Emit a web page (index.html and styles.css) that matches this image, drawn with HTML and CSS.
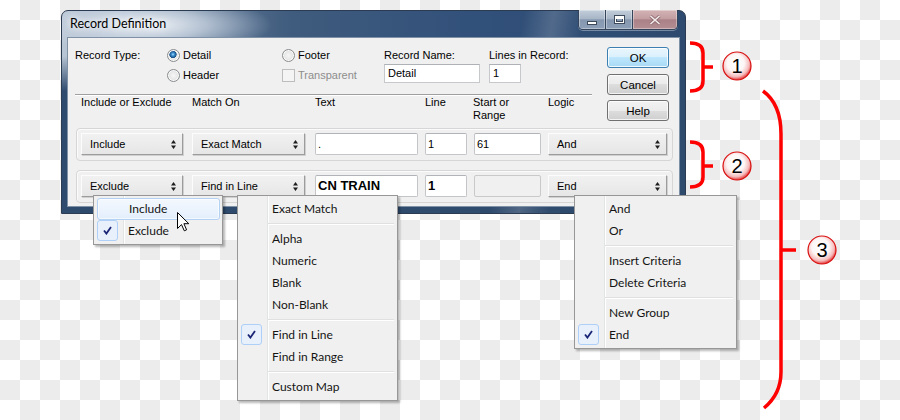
FILE: index.html
```html
<!DOCTYPE html>
<html>
<head>
<meta charset="utf-8">
<title>Record Definition</title>
<link rel="stylesheet" href="styles.css">
</head>
<body>
<div class="stage">
  <div class="window">
    <div class="titlebar">
      <span class="title">Record Definition</span>
      <div class="caption-btns">
        <span class="cb cb-min"><i class="g-min"></i></span>
        <span class="cb cb-max"><i class="g-max"></i></span>
        <span class="cb cb-close"><svg width="12" height="10" viewBox="0 0 12 10"><path d="M1.5 1 L10.5 9 M10.5 1 L1.5 9" stroke="#8c6b70" stroke-width="3.2"/><path d="M1.5 1 L10.5 9 M10.5 1 L1.5 9" stroke="#f4eaea" stroke-width="1.6"/></svg></span>
      </div>
    </div>
    <div class="client">
      <div class="upper">
        <div class="upper-main">
          <div class="rtype">
            <span class="lbl">Record Type:</span>
            <span class="opt"><span class="radio on"></span>Detail</span>
            <span class="opt"><span class="radio"></span>Footer</span>
            <span class="lbl">Record Name:</span>
            <span class="lbl">Lines in Record:</span>
            <span></span>
            <span class="opt"><span class="radio"></span>Header</span>
            <span class="opt dis"><span class="check"></span>Transparent</span>
            <span class="tb tb-name">Detail</span>
            <span class="tb tb-lines">1</span>
          </div>
          <div class="sep"></div>
          <div class="cols">
            <span class="h1">Include or Exclude</span>
            <span class="h2">Match On</span>
            <span class="h3">Text</span>
            <span class="h4">Line</span>
            <span class="h5">Start or<br>Range</span>
            <span class="h6">Logic</span>
          </div>
        </div>
        <div class="btns">
          <span class="btn btn-default">OK</span>
          <span class="btn btn-cancel">Cancel</span>
          <span class="btn btn-help">Help</span>
        </div>
      </div>

      <div class="crit">
        <span class="combo w1">Include<svg class="arr" width="5" height="9" viewBox="0 0 5 9"><path d="M2.5 0 L5 3.5 H0Z M0 5.5 H5 L2.5 9Z" fill="#1e1e1e"/></svg></span>
        <span class="combo w2">Exact Match<svg class="arr" width="5" height="9" viewBox="0 0 5 9"><path d="M2.5 0 L5 3.5 H0Z M0 5.5 H5 L2.5 9Z" fill="#1e1e1e"/></svg></span>
        <span class="inp w3">.</span>
        <span class="inp w4">1</span>
        <span class="inp w5">61</span>
        <span class="combo w6">And<svg class="arr" width="5" height="9" viewBox="0 0 5 9"><path d="M2.5 0 L5 3.5 H0Z M0 5.5 H5 L2.5 9Z" fill="#1e1e1e"/></svg></span>
      </div>
      <div class="crit">
        <span class="combo w1">Exclude<svg class="arr" width="5" height="9" viewBox="0 0 5 9"><path d="M2.5 0 L5 3.5 H0Z M0 5.5 H5 L2.5 9Z" fill="#1e1e1e"/></svg></span>
        <span class="combo w2">Find in Line<svg class="arr" width="5" height="9" viewBox="0 0 5 9"><path d="M2.5 0 L5 3.5 H0Z M0 5.5 H5 L2.5 9Z" fill="#1e1e1e"/></svg></span>
        <span class="inp w3 bold">CN TRAIN</span>
        <span class="inp w4 bold">1</span>
        <span class="inp w5 disabled"></span>
        <span class="combo w6">End<svg class="arr" width="5" height="9" viewBox="0 0 5 9"><path d="M2.5 0 L5 3.5 H0Z M0 5.5 H5 L2.5 9Z" fill="#1e1e1e"/></svg></span>
      </div>
    </div>
  </div>

  <div class="menu menu-ie">
    <div class="mi hover">Include</div>
    <div class="mi"><span class="tick"><svg width="9" height="9" viewBox="0 0 9 9"><path d="M1 4.5 L3.4 7.6 L8 1" stroke="#1b2677" stroke-width="1.8" fill="none"/></svg></span>Exclude</div>
  </div>

  <div class="menu menu-match">
    <div class="mi">Exact Match</div>
    <div class="ms"></div>
    <div class="mi">Alpha</div>
    <div class="mi">Numeric</div>
    <div class="mi">Blank</div>
    <div class="mi">Non-Blank</div>
    <div class="ms"></div>
    <div class="mi"><span class="tick"><svg width="9" height="9" viewBox="0 0 9 9"><path d="M1 4.5 L3.4 7.6 L8 1" stroke="#1b2677" stroke-width="1.8" fill="none"/></svg></span>Find in Line</div>
    <div class="mi">Find in Range</div>
    <div class="ms"></div>
    <div class="mi">Custom Map</div>
  </div>

  <div class="menu menu-logic">
    <div class="mi">And</div>
    <div class="mi">Or</div>
    <div class="ms"></div>
    <div class="mi">Insert Criteria</div>
    <div class="mi">Delete Criteria</div>
    <div class="ms"></div>
    <div class="mi">New Group</div>
    <div class="mi"><span class="tick"><svg width="9" height="9" viewBox="0 0 9 9"><path d="M1 4.5 L3.4 7.6 L8 1" stroke="#1b2677" stroke-width="1.8" fill="none"/></svg></span>End</div>
  </div>

  <svg class="cursor" width="13" height="20" viewBox="0 0 13 20"><path d="M0.5 0.5 L0.5 16.5 L4.5 12.6 L7.3 18.8 L9.6 17.8 L6.9 11.7 L11.8 11.7 Z" fill="#fff" stroke="#000" stroke-width="1" stroke-linejoin="miter"/></svg>

  <svg class="notes" width="900" height="420" viewBox="0 0 900 420">
    <defs>
      <radialGradient id="rg" cx="45%" cy="40%" r="62%">
        <stop offset="0" stop-color="#ffffff"/>
        <stop offset="0.5" stop-color="#fdf6f6"/>
        <stop offset="0.78" stop-color="#f5bcbc"/>
        <stop offset="1" stop-color="#e02020"/>
      </radialGradient>
    </defs>
    <g fill="none" stroke="#f00" stroke-width="3.5">
      <path d="M690 43 Q703 43 703 53 L703 81 Q703 91 690 91 M703 67 L713 67"/>
      <path d="M690 142 Q703 142 703 152 L703 177 Q703 187 690 187 M703 166 L713 166"/>
      <path d="M763 91 Q781 104 781 134 L781 372 Q781 394 764 408 M781 250 L796 250"/>
    </g>
    <g stroke="#d81010" stroke-width="1.2" fill="url(#rg)">
      <circle cx="737" cy="66" r="14"/>
      <circle cx="737" cy="166" r="14"/>
      <circle cx="822" cy="250" r="14"/>
    </g>
    <g font-family="Liberation Sans, Arial, sans-serif" font-size="20" text-anchor="middle" fill="#000">
      <text x="737" y="73">1</text>
      <text x="737" y="173">2</text>
      <text x="822" y="257">3</text>
    </g>
  </svg>
</div>
</body>
</html>
```

FILE: styles.css
```css
* { box-sizing: border-box; }
html, body { margin: 0; padding: 0; }
body {
  width: 900px;
  height: 420px;
  overflow: hidden;
  font-family: "Liberation Sans", Arial, sans-serif;
  font-size: 11px;
  color: #000;
  background: repeating-conic-gradient(#ececec 0 25%, #ffffff 0 50%) 0 0 / 40px 40px;
}
.stage {
  position: relative;
  width: 900px;
  height: 420px;
  padding: 10px 0 0 61px;
}

/* ---------- window frame ---------- */
.window {
  width: 625px;
  border: 1px solid #2a3b52;
  border-radius: 7px 7px 0 0;
  padding: 0 6px 7px 6px;
  background:
    radial-gradient(ellipse 120px 30px at 90px 14px, rgba(238,242,247,0.95) 0, rgba(214,223,234,0.7) 45%, rgba(200,212,226,0) 100%),
    linear-gradient(100deg, rgba(255,255,255,0) 455px, rgba(255,255,255,0.16) 485px, rgba(255,255,255,0) 515px),
    linear-gradient(180deg, rgba(46,73,108,0) 0, rgba(46,73,108,0) 45px, #2e4a6d 80px),
    linear-gradient(90deg, #b8c5d4 0, #a3b3c6 60px, #5f7896 140px, #3f5b7d 230px, #31507a 420px, #2e4a6e 100%);
}
.titlebar {
  display: flex;
  height: 27px;
}
.title {
  margin: 5px 0 0 2px;
  font-family: Lato, "Liberation Sans", sans-serif;
  font-size: 12.5px;
  line-height: 16px;
  color: #000;
  text-shadow: 0 0 6px #fff, 0 0 10px rgba(255,255,255,0.9);
}
.caption-btns {
  display: flex;
  margin: -1px 1px 0 auto;
  height: 20px;
  border: 1px solid #34455b;
  border-top: none;
  border-radius: 0 0 5px 5px;
  overflow: hidden;
  box-shadow: 0 1px 0 rgba(255,255,255,0.35);
}
.cb {
  display: flex;
  align-items: center;
  justify-content: center;
  height: 19px;
  box-shadow: inset 0 0 0 1px rgba(255,255,255,0.35);
}
.cb + .cb { border-left: 1px solid #34455b; }
.cb-min, .cb-max {
  width: 27px;
  background: linear-gradient(180deg, #c3ceda 0, #a8b6c7 45%, #8598b0 52%, #8c9fb6 100%);
}
.cb-min { width: 26px; }
.cb-close {
  width: 45px;
  background: linear-gradient(180deg, #d3b3b5 0, #c29ea1 45%, #aa8186 52%, #b48e93 100%);
}
.g-min {
  display: block;
  width: 10px;
  height: 4px;
  margin-top: 6px;
  background: #fff;
  border: 1px solid #3c4a5c;
}
.g-max {
  display: block;
  width: 11px;
  height: 9px;
  background: transparent;
  border: 1px solid #3c4a5c;
  box-shadow: inset 0 0 0 1px #fff, inset 0 2px 0 1px #fff, inset 0 0 0 2px #3c4a5c;
}

/* ---------- client area ---------- */
.client {
  background: #f0f0f0;
  box-shadow: 0 0 0 1px #7f91a7;
  padding-bottom: 3px;
}
.upper { display: flex; }
.upper-main {
  flex-shrink: 0;
  width: 524px;
  padding: 7px 0 0 7px;
}
.rtype {
  display: grid;
  grid-template-columns: 92px 115px 102px 105px 103px;
  grid-template-rows: 20px 20px;
  align-items: center;
}
.lbl { white-space: nowrap; }
.opt {
  display: flex;
  align-items: center;
  gap: 3px;
  white-space: nowrap;
}
.opt.dis { color: #8d8d8d; }
.radio {
  width: 13px;
  height: 13px;
  border-radius: 50%;
  border: 1px solid #8a8c8e;
  background: radial-gradient(circle at 50% 50%, #f6f6f6 0, #ebebeb 40%, #d2d4d6 90%);
  box-shadow: inset 0 0 0 1px #fbfbfb;
}
.radio.on {
  background:
    radial-gradient(circle at 45% 40%, #a5dcff 0, #3d8fd0 1.5px, #1e5a96 3px, #174d84 3.4px, rgba(0,0,0,0) 3.9px),
    radial-gradient(circle at 50% 50%, #f6f6f6 0, #ebebeb 40%, #d2d4d6 90%);
}
.check {
  width: 13px;
  height: 13px;
  border: 1px solid #bdbdbd;
  background: #f4f4f4;
}
.tb {
  align-self: start;
  margin-top: -1px;
  height: 19px;
  line-height: 17px;
  padding-left: 3px;
  background: #fff;
  border: 1px solid #c6c8cc;
  border-top-color: #aeb1b6;
}
.tb-name { width: 96px; }
.tb-lines { width: 32px; }
.sep {
  width: 517px;
  margin-top: 9px;
  border-top: 1px solid #a0a0a0;
  border-bottom: 1px solid #fff;
}
.cols {
  display: flex;
  height: 26px;
  padding-left: 6px;
  line-height: 13px;
}
.cols > span { flex-shrink: 0; white-space: nowrap; }
.h1 { width: 111px; }
.h2 { width: 123px; }
.h3 { width: 110px; }
.h4 { width: 48px; }
.h5 { width: 75px; }
.h6 { width: 40px; }

.btns {
  display: flex;
  flex-direction: column;
  margin-left: 15px;
  padding-top: 9px;
}
.btn {
  display: flex;
  align-items: center;
  justify-content: center;
  width: 62px;
  height: 21px;
  border: 1px solid #707070;
  border-radius: 3px;
  background: linear-gradient(180deg, #f2f2f2 0, #ebebeb 50%, #dddddd 50%, #cfcfcf 100%);
  box-shadow: inset 0 0 0 1px rgba(255,255,255,0.75);
  font-size: 11.5px;
}
.btn-default {
  border-color: #3c7fb1;
  background: linear-gradient(180deg, #eaf6fd 0, #d9f0fc 50%, #bee6fd 50%, #a7d9f5 100%);
  box-shadow: inset 0 0 0 1px rgba(255,255,255,0.8);
}
.btn-cancel { margin-top: 6px; }
.btn-help { margin-top: 5px; }

/* ---------- criteria rows ---------- */
.crit {
  display: flex;
  width: 597px;
  height: 33px;
  margin: 6px 0 0 8px;
  padding: 4px 0 0 4px;
  border: 1px solid #d6d6d6;
  border-radius: 4px;
  box-shadow: inset 1px 1px 0 #fbfbfb;
}
.crit + .crit { margin-top: 9px; }
.crit > span { flex-shrink: 0; }
.combo {
  display: flex;
  align-items: center;
  justify-content: space-between;
  height: 22px;
  padding: 0 6px 0 8px;
  border: 1px solid;
  border-color: #fcfcfc #9c9c9c #9c9c9c #fcfcfc;
  background: linear-gradient(180deg, #f1f1f1 0, #e6e6e6 100%);
  box-shadow: 1px 1px 0 #d0d0d0;
  white-space: nowrap;
}
.inp {
  height: 22px;
  line-height: 20px;
  padding-left: 2px;
  background: #fff;
  border: 1px solid #c3c5c9;
  border-top-color: #b0b3b8;
  border-radius: 2px;
  white-space: nowrap;
}
.inp.bold {
  font-weight: bold;
  font-size: 13px;
}
.inp.disabled { background: #f0f0f0; border-color: #c9c9c9; }
.w1 { width: 102px; }
.w2 { width: 113px; margin-left: 9px; }
.w3 { width: 103px; margin-left: 10px; }
.w4 { width: 42px; margin-left: 7px; }
.w5 { width: 67px; margin-left: 7px; }
.w6 { width: 119px; margin-left: 7px; }

/* ---------- popup menus ---------- */
.menu {
  position: absolute;
  top: 195px;
  padding: 2px;
  border: 1px solid #979797;
  background:
    linear-gradient(90deg, rgba(0,0,0,0) 29px, #e2e3e3 29px, #e2e3e3 30px, #ffffff 30px, #ffffff 31px, rgba(0,0,0,0) 31px),
    #f0f0f0;
  box-shadow: 2px 2px 2px rgba(0,0,0,0.28);
  font-family: Lato, "Liberation Sans", sans-serif;
  font-size: 12px;
  color: #141414;
}
.menu-ie { left: 93px; width: 130px; }
.menu-match { left: 237px; width: 161px; }
.menu-logic { left: 574px; width: 163px; }
.mi {
  display: flex;
  align-items: center;
  height: 22px;
  padding-left: 32px;
  padding-bottom: 1px;
  white-space: nowrap;
}
.mi.hover {
  margin-left: 1px;
  padding-left: 31px;
  border: 1px solid #b3d1f2;
  border-radius: 3px;
  background: linear-gradient(180deg, #f4f8fe 0, #e3eefc 100%);
  box-shadow: inset 0 0 0 1px rgba(255,255,255,0.6);
}
.tick {
  display: flex;
  align-items: center;
  justify-content: center;
  width: 21px;
  height: 21px;
  margin-left: -31px;
  margin-right: 10px;
  border: 1px solid #aecff7;
  border-radius: 3px;
  background: #e7f0fb;
}
.ms {
  margin: 3px 1px 3px 28px;
  border-top: 1px solid #e0e0e0;
  border-bottom: 1px solid #ffffff;
}

.cursor {
  position: absolute;
  left: 177px;
  top: 212px;
}
.notes {
  position: absolute;
  left: 0;
  top: 0;
  pointer-events: none;
}
```
